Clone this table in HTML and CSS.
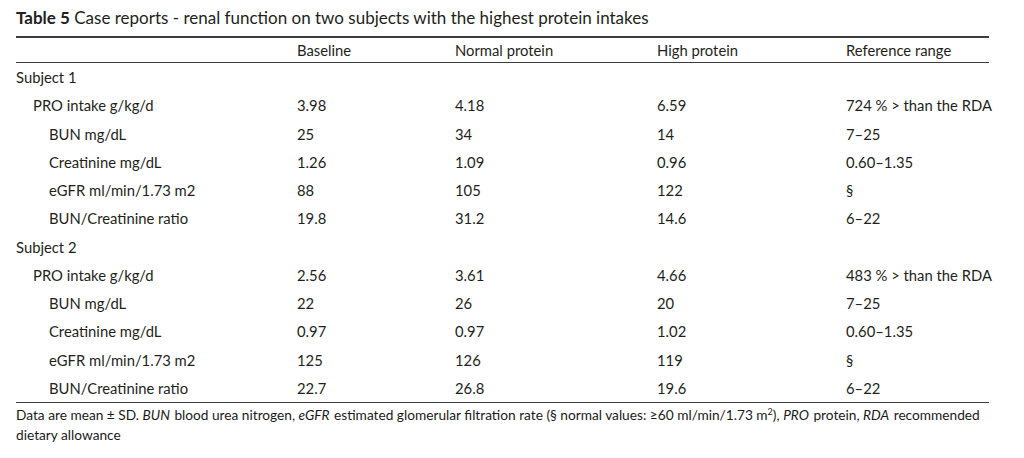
FILE: index.html
```html
<!DOCTYPE html>
<html lang="en">
<head>
<meta charset="utf-8">
<title>Table 5</title>
<link rel="stylesheet" href="styles.css">
</head>
<body>
<div class="wrap">
  <div class="caption"><b>Table 5</b> Case reports - renal function on two subjects with the highest protein intakes</div>
  <table class="data">
    <colgroup>
      <col class="c-label"><col class="c-base"><col class="c-norm"><col class="c-high"><col class="c-ref">
    </colgroup>
    <thead>
      <tr><th></th><th>Baseline</th><th>Normal protein</th><th>High protein</th><th>Reference range</th></tr>
    </thead>
    <tbody>
      <tr><td class="l0">Subject 1</td><td></td><td></td><td></td><td></td></tr>
      <tr><td class="l1">PRO intake g/kg/d</td><td>3.98</td><td>4.18</td><td>6.59</td><td>724 % &gt; than the RDA</td></tr>
      <tr><td class="l2">BUN mg/dL</td><td>25</td><td>34</td><td>14</td><td>7–25</td></tr>
      <tr><td class="l2">Creatinine mg/dL</td><td>1.26</td><td>1.09</td><td>0.96</td><td>0.60–1.35</td></tr>
      <tr><td class="l2">eGFR ml/min/1.73 m2</td><td>88</td><td>105</td><td>122</td><td>§</td></tr>
      <tr><td class="l2">BUN/Creatinine ratio</td><td>19.8</td><td>31.2</td><td>14.6</td><td>6–22</td></tr>
      <tr><td class="l0">Subject 2</td><td></td><td></td><td></td><td></td></tr>
      <tr><td class="l1">PRO intake g/kg/d</td><td>2.56</td><td>3.61</td><td>4.66</td><td>483 % &gt; than the RDA</td></tr>
      <tr><td class="l2">BUN mg/dL</td><td>22</td><td>26</td><td>20</td><td>7–25</td></tr>
      <tr><td class="l2">Creatinine mg/dL</td><td>0.97</td><td>0.97</td><td>1.02</td><td>0.60–1.35</td></tr>
      <tr><td class="l2">eGFR ml/min/1.73 m2</td><td>125</td><td>126</td><td>119</td><td>§</td></tr>
      <tr><td class="l2">BUN/Creatinine ratio</td><td>22.7</td><td>26.8</td><td>19.6</td><td>6–22</td></tr>
    </tbody>
  </table>
  <p class="foot">Data are mean ± SD. <i>BUN</i> blood urea nitrogen, <i>eGFR</i> estimated glomerular filtration rate (§ normal values: ≥60 ml/min/1.73 m<sup>2</sup>), <i>PRO</i> protein, <i>RDA</i> recommended dietary allowance</p>
</div>
</body>
</html>
```

FILE: styles.css
```css
html, body {
  margin: 0;
  padding: 0;
  background: #ffffff;
}
body {
  font-family: Lato, "Open Sans", sans-serif;
  color: #231f20;
}
.wrap {
  width: 973px;
  padding: 8px 0 0 16px;
}
.caption {
  font-size: 17px;
  line-height: 20px;
  height: 28px;
  color: #231f20;
  white-space: nowrap;
}
.caption b {
  font-weight: 700;
}
.data {
  width: 973px;
  border-collapse: collapse;
  table-layout: fixed;
  font-size: 14.8px;
}
.c-label { width: 281px; }
.c-base { width: 158px; }
.c-norm { width: 202px; }
.c-high { width: 189px; }
.c-ref { width: 143px; }
.data thead tr {
  border-top: 2px solid #3d3d3d;
  border-bottom: 1px solid #3d3d3d;
}
.data th {
  font-weight: 400;
  text-align: left;
  height: 24px;
  padding: 0;
  vertical-align: middle;
  white-space: nowrap;
}
.data td {
  height: 28.25px;
  padding: 0;
  vertical-align: middle;
  white-space: nowrap;
}
.data tbody tr:last-child {
  border-bottom: 1px solid #3d3d3d;
}
.l0 { padding-left: 0; }
.data td.l1 { padding-left: 17px; }
.data td.l2 { padding-left: 33px; }
.foot {
  margin: 2px 0 0;
  font-size: 13.7px;
  line-height: 20px;
  color: #1a1a1a;
}
.foot i {
  padding-right: 1px;
}
.foot sup {
  font-size: 9px;
  line-height: 0;
  vertical-align: 5px;
}
```
